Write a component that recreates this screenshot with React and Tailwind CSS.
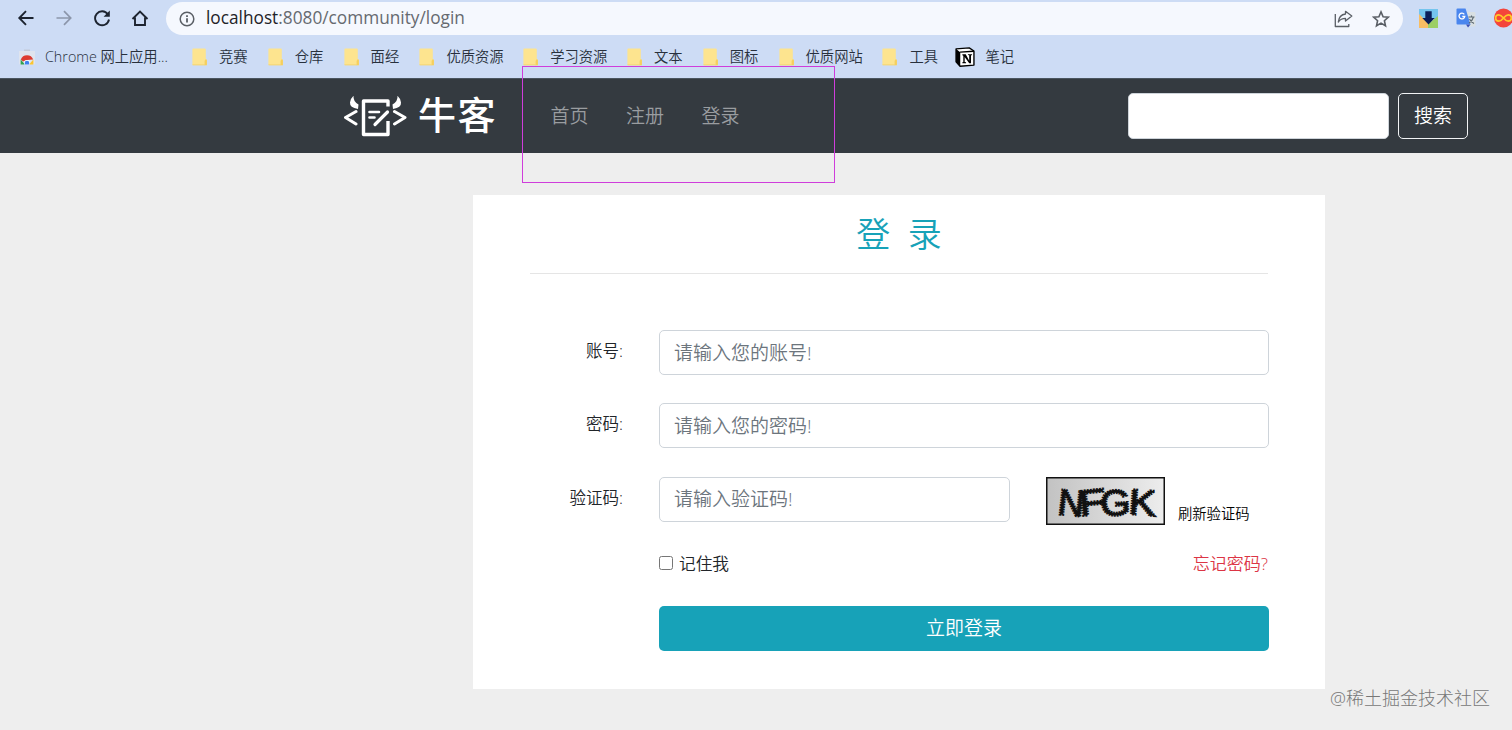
import React, { useState } from "react"

const BOOKMARKS = [
  { label: "Chrome 网上应用...", icon: "chrome", width: "w-[127px]", space: "mr-[20px] gap-[10px]" },
  { label: "竞赛", icon: "folder", width: "w-[29px]" },
  { label: "仓库", icon: "folder", width: "w-[29px]" },
  { label: "面经", icon: "folder", width: "w-[29px]" },
  { label: "优质资源", icon: "folder", width: "w-[57px]" },
  { label: "学习资源", icon: "folder", width: "w-[57px]" },
  { label: "文本", icon: "folder", width: "w-[29px]" },
  { label: "图标", icon: "folder", width: "w-[29px]" },
  { label: "优质网站", icon: "folder", width: "w-[57px]" },
  { label: "工具", icon: "folder", width: "w-[29px]", space: "mr-[17px] gap-[11px]" },
  { label: "笔记", icon: "notion", width: "w-[29px]", space: "gap-[10px]" }
]

const NAV_LINKS = ["首页", "注册", "登录"]

function FolderIcon() {
  return (
    <svg width="16" height="18" viewBox="0 0 16 18" className="shrink-0">
      <path d="M1.2 0.5h11.6q1 0 1 1V11l1 1v4.5q0 .8-.8.8H1.2q-.8 0-.8-.8V1.3q0-.8.8-.8z" fill="#fde48f" />
      <path d="M12.6 17.2V13l1.3-2 1 1v5.2z" fill="#f5cf5e" />
      <path d="M0.4 16.4h12.4v.9H.6z" fill="#f1cf6c" />
    </svg>
  )
}

function ChromeStoreIcon() {
  return (
    <svg width="16" height="16" viewBox="0 0 16 16" className="shrink-0">
      <path d="M0 2h16V14q0 1.500-1.500 1.500h-13Q0 15.500 0 14z" fill="#dfe4ee" />
      <path d="M5 0.500h6v1.500H5z" fill="#c3cad8" />
      <path d="M1.800 10.500A6.600 6.600 0 0 1 14.200 10.500L8 11 4 12.500z" fill="#dd3b30" />
      <path d="M1.600 10.500 6 15.500H1.600z" fill="#30a14e" />
      <path d="M14.400 10.500 10 15.500h4.400z" fill="#fbc52d" />
      <path d="M5 15.500V14a3 3 0 0 1 6 0v1.500z" fill="#fff" />
      <path d="M5.700 15.500V14a2.300 2.300 0 0 1 4.600 0v1.500z" fill="#3d7ff0" />
    </svg>
  )
}

function NotionIcon() {
  return (
    <svg width="20" height="20" viewBox="0 0 19 19" className="shrink-0">
      <path d="M1 1.800 13.500.8 18 3.800V17.200L4.800 18.300 1 14z" fill="#fff" stroke="#000" strokeWidth="1.300" strokeLinejoin="round" />
      <path d="M1 1.800 5 5v13.200L1 14z" fill="#000" />
      <path d="M4.800 4.900 18 4" stroke="#000" strokeWidth="1.300" />
      <path d="M7 7h3.200l3.300 6V7.900l-1.200-.3v-.8h3.900v.8l-1 .4v7.400h-1.700L9.200 9.400v4.800l1.300.3v.9H7v-.8l.9-.4V8.200L7 7.900z" fill="#000" />
    </svg>
  )
}

function BookmarkIcon({ type }) {
  if (type === "chrome") return <ChromeStoreIcon />
  if (type === "notion") return <NotionIcon />
  return <FolderIcon />
}

function BrowserBar() {
  return (
    <div className="h-[78px] bg-[#cddcf5] overflow-hidden">
      {/* Address row */}
      <div className="h-[36px] flex items-center">
        <div className="w-[166px] h-full pl-[17px] flex items-center gap-[20px] shrink-0">
          <svg width="18" height="18" viewBox="0 0 18 18" fill="none" stroke="#1d2430" strokeWidth="1.900">
            <path d="M16.500 9H2.500M9 2.200 2.300 9 9 15.800" />
          </svg>
          <svg width="18" height="18" viewBox="0 0 18 18" fill="none" stroke="#8c96aa" strokeWidth="1.700">
            <path d="M1.500 9h14M9 2.200 15.700 9 9 15.800" />
          </svg>
          <svg width="18" height="18" viewBox="0 0 18 18" fill="none" stroke="#1d2430" strokeWidth="1.900">
            <path d="M14.800 5.200A7 7 0 1 0 16 10.500" />
            <path d="M16.800 1.500v6.200h-6.200z" fill="#1d2430" stroke="none" />
          </svg>
          <svg width="18" height="18" viewBox="0 0 18 18" fill="none" stroke="#1d2430" strokeWidth="1.900">
            <path d="M1.500 10 9 2.500l7.500 7.500M4 8.500v7.500h10V8.500" />
          </svg>
        </div>
        <div className="mt-[1px] w-[1237px] h-[33px] rounded-full bg-[#f5f8fe] flex items-center shrink-0 pl-[13px] pr-[13px]">
          <svg width="16" height="16" viewBox="0 0 16 16" fill="none" stroke="#5a5f66" strokeWidth="1.500">
            <circle cx="8" cy="8" r="6.800" />
            <path d="M8 7.200v4.300M8 4.300v1.700" strokeWidth="1.800" />
          </svg>
          <p className="ml-[11px] -mt-[1px] w-[258px] text-[17.250px] leading-6 whitespace-nowrap text-[#666a70]">
            <span className="text-[#1f2328]">localhost</span>:8080/community/login
          </p>
          <svg className="ml-auto" width="19" height="18" viewBox="0 0 19 18" fill="none" stroke="#5a5f66" strokeWidth="1.300" strokeLinejoin="round">
            <path d="M1.300 4v12.500h13.500V14" />
            <path d="M11.500 1.300 17.800 6 11.500 11V8.400C8 8.400 6 9.600 4.300 12 4.800 7.500 7.200 4.500 11.500 4z" />
          </svg>
          <svg className="ml-[19px]" width="18" height="18" viewBox="0 0 18 18" fill="none" stroke="#5a5f66" strokeWidth="1.600">
            <path d="m9 1.900 2.100 4.800 5.200.5-3.900 3.500 1.100 5.100L9 13.100l-4.500 2.700 1.100-5.100L1.700 7.200l5.200-.5z" />
          </svg>
        </div>
        <div className="flex items-center gap-[18px] pl-[15px] shrink-0">
          <svg width="20" height="20" viewBox="0 0 20 20">
            <path d="M1 1h19v10H1z" fill="#74c5ee" />
            <path d="M1 6 10 15v5H1z" fill="#f8bd63" />
            <path d="M20 8 10 16v4h10z" fill="#9ccf66" />
            <path d="M7.300 3.300h6.400V10h3L10.500 16.500 4.300 10h3z" fill="#0b1f58" />
          </svg>
          <svg width="20" height="20" viewBox="0 0 20 20">
            <path d="M9 4h9.500q1 0 1 1v12.500q0 1-1 1H12z" fill="#d9e0e3" />
            <path d="M1.500 0.500H9.500l5 16H1.500Q.5 16.500.5 15.500V1.500q0-1 1-1z" fill="#4a86ee" />
            <path d="M10 16.500H14.500L12 19.500z" fill="#3a50b5" />
            <path d="M8.300 6.300A2.900 2.900 0 1 0 8.800 8.500H6.300" fill="none" stroke="#fff" strokeWidth="1.300" />
            <path d="M12.500 9h6M15.500 7.500V9M17.500 9c-.8 3-2.500 4.700-4.500 6M13.500 11c1 2 2.500 3.500 4.500 4.500" fill="none" stroke="#5c6870" strokeWidth="1.100" />
          </svg>
          <svg width="20" height="20" viewBox="0 0 20 20">
            <circle cx="9.500" cy="10" r="9.500" fill="#f4453b" />
            <path d="M9.500 10C7.500 7.500 6.200 6.800 4.800 6.800a3.200 3.200 0 0 0 0 6.400C6.200 13.200 7.500 12.500 9.500 10s3.300-3.200 4.700-3.200a3.200 3.200 0 0 1 0 6.400C12.800 13.200 11.500 12.500 9.500 10z" fill="none" stroke="#ffc928" strokeWidth="1.700" />
          </svg>
        </div>
      </div>

      {/* Bookmarks */}
      <div className="h-[42px] flex items-center pl-[19px]">
        {BOOKMARKS.map((item) => (
          <div key={item.label} className={`flex items-center shrink-0 ${item.space || "mr-[19.8px] gap-[11px]"}`}>
            <BookmarkIcon type={item.icon} />
            <span className={`${item.width} text-[14.3px] leading-5 font-[350] whitespace-nowrap text-[#28303c]`}>{item.label}</span>
          </div>
        ))}
      </div>
    </div>
  )
}

function Logo() {
  return (
    <div className="flex items-center w-[152px] text-white">
      <svg width="64" height="42" viewBox="0 0 64 42" fill="none" stroke="#fff" strokeWidth="3" strokeLinejoin="round" strokeLinecap="round" className="shrink-0">
        {/* Angle brackets */}
        <path d="M13 16.500 2.500 22.500 13 29M51.500 16.500 62 22.500 51.500 29" />
        {/* Page and pen */}
        <path d="M45 11.500V6H20.500v33.500H45V26" strokeLinecap="butt" strokeWidth="3.400" />
        <path d="M26.500 17h9.500M26.500 22.500h5" strokeWidth="2.600" />
        <path d="M44.500 17 32 29.500" strokeWidth="3.200" />
        {/* Horns */}
        <path d="M10.500.8Q10 6.500 15.500 9.500L15 14Q6.500 12.500 7 7.500 7.500 3.500 10.500.8zM54.500.8Q55 6.500 49.500 9.500L50 14Q58.500 12.500 58 7.500 57.500 3.500 54.500.8z" fill="#fff" stroke="none" />
      </svg>
      <span className="ml-[11px] -mt-[3px] text-[38px] leading-[42px] tracking-[1.500px] font-medium whitespace-nowrap">牛客</span>
    </div>
  )
}

function SiteHeader() {
  return (
    <header className="h-[74.500px] bg-[#343a40] border-t border-[#4a5560] flex items-center pl-[343px] pr-[44px]">
      <Logo />
      <nav className="ml-[55.500px] flex gap-[37.500px]">
        {NAV_LINKS.map((link) => (
          <a key={link} href="#" className="text-[19px] leading-7 font-[350] text-[#9a9da0]">{link}</a>
        ))}
      </nav>
      <form className="ml-auto flex gap-[9px]">
        <input type="text" aria-label="搜索" className="w-[261px] h-[46px] rounded-[5px] bg-white border border-[#ced4da]" />
        <button type="button" className="w-[70px] h-[46px] rounded-[5px] border border-[#f1f3f5] text-[19px] font-[350] text-white">搜索</button>
      </form>
    </header>
  )
}

// Generated code image, each letter gets its own tilt
function Captcha() {
  return (
    <svg width="119" height="48" viewBox="0 0 119 48" className="shrink-0">
      <defs>
        <linearGradient id="captchaBg" x1="0" y1="0" x2="1" y2="0">
          <stop offset="0" stopColor="#c2c2c2" />
          <stop offset="1" stopColor="#ededed" />
        </linearGradient>
      </defs>
      <rect x="0.750" y="0.750" width="117.500" height="46.500" fill="url(#captchaBg)" stroke="#111" strokeWidth="1.500" />
      <g fontFamily="Liberation Sans, Arial, sans-serif" fontSize="36" fill="#111" stroke="#111" strokeWidth="2.400" strokeDasharray="1.600 0.900">
        <text transform="translate(11 37) rotate(6)" textLength="26" lengthAdjust="spacingAndGlyphs">N</text>
        <text transform="translate(34 39) rotate(-6)" textLength="27" lengthAdjust="spacingAndGlyphs">F</text>
        <text transform="translate(55 39) rotate(-3)" textLength="30" lengthAdjust="spacingAndGlyphs">G</text>
        <text transform="translate(82 37) rotate(4)" textLength="27" lengthAdjust="spacingAndGlyphs">K</text>
      </g>
    </svg>
  )
}

function Field({ label, type, placeholder, children }) {
  return (
    <div className="flex h-[45px] mb-[28.250px]">
      <label className="w-[93px] mr-[36px] shrink-0 pt-[9px] text-right text-[16.5px] leading-6 font-[350] text-[#212529]">{label}</label>
      <input
        type={type}
        placeholder={placeholder}
        className="flex-1 min-w-0 h-[45px] px-[14px] rounded-[5px] border border-[#ced4da] bg-white text-[19px] font-[350] placeholder:text-[#6c757d] outline-none"
      />
      {children}
    </div>
  )
}

function LoginCard() {
  const [remember, setRemember] = useState(false)

  return (
    <main className="mt-[42.500px] ml-[473px] w-[852px] h-[494px] bg-white px-[57px] pt-[17px]">
      <h1 className="text-center text-[34px] leading-[44px] font-[350] text-[#17a2b8] pb-[17px] border-b border-[#e5e5e5]">
        登&nbsp;&nbsp;录
      </h1>
      <form className="pt-[56px] mr-[-1px]">
        <Field label="账号:" type="text" placeholder="请输入您的账号!" />
        <Field label="密码:" type="password" placeholder="请输入您的密码!" />
        <Field label="验证码:" type="text" placeholder="请输入验证码!">
          <div className="w-[259px] pl-[36px] flex shrink-0">
            <Captcha />
            <a href="#" className="ml-[13px] pt-[27px] text-[14.3px] leading-5 font-[350] whitespace-nowrap text-black">刷新验证码</a>
          </div>
        </Field>

        <div className="ml-[129px] mt-[29.500px] h-[26px] flex items-center justify-between text-[16.700px]">
          <label className="flex items-center gap-[6px] font-[350] text-[#212529]">
            <input type="checkbox" checked={remember} onChange={() => setRemember(!remember)} className="w-[14px] h-[14px] -mt-[2px]" />
            记住我
          </label>
          <a href="#" className="pr-[1px] text-[17px] font-[350] text-[#dc3545]">忘记密码?</a>
        </div>

        <button type="button" className="ml-[129px] mt-[29px] w-[610px] h-[45px] rounded-[5px] bg-[#17a2b8] text-[19px] font-[350] text-white">
          立即登录
        </button>
      </form>
    </main>
  )
}

export default function App() {
  return (
    <div className="relative w-[1512px] h-[730px] overflow-hidden bg-[#eeeeee] font-['Open_Sans','Noto_Sans_CJK_SC',sans-serif]">
      <BrowserBar />
      <SiteHeader />
      <LoginCard />

      {/* Selection frame over the nav links */}
      <div className="absolute left-[522px] top-[66px] w-[313px] h-[117px] border border-[#cf3ddb] pointer-events-none" />
      <p className="absolute left-[1330px] top-[686px] text-[18px] leading-6 font-light whitespace-nowrap text-[#777]">@稀土掘金技术社区</p>
    </div>
  )
}
